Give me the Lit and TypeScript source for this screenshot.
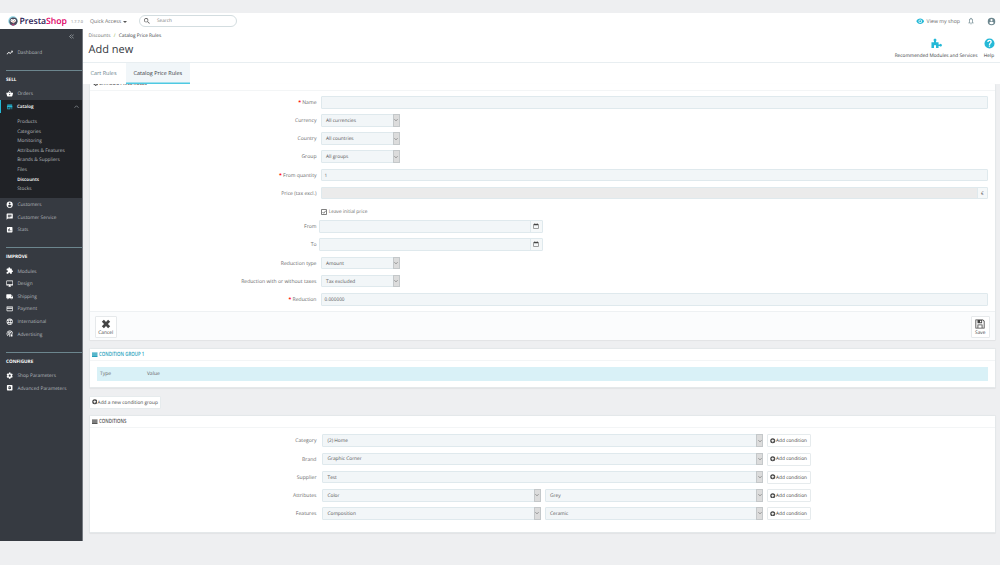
import { LitElement, html, css, svg, nothing } from "lit";
import { customElement, property } from "lit/decorators.js";
import { classMap } from "lit/directives/class-map.js";

const ICONS: Record<string, string> = {
  trend: "M16 6l2.29 2.29-4.88 4.88-4-4L2 16.59 3.41 18l6-6 4 4 6.3-6.29L22 12V6z",
  basket: "M17.21 9l-4.38-6.56a1 1 0 0 0-1.66 0L6.79 9H2c-.55 0-1 .45-1 1l.04.27 2.54 9.27C3.81 20.4 4.6 21 5.5 21h13c.9 0 1.69-.6 1.92-1.46l2.54-9.27L23 10c0-.55-.45-1-1-1h-4.79zM9 9l3-4.4L15 9H9zm3 8a2 2 0 1 1 0-4 2 2 0 0 1 0 4z",
  store: "M20 4H4v2h16V4zm1 10v-2l-1-5H4l-1 5v2h1v6h10v-6h4v6h2v-6h1zm-9 4H6v-4h6v4z",
  account: "M12 2a10 10 0 1 0 0 20 10 10 0 0 0 0-20zm0 3a3 3 0 1 1 0 6 3 3 0 0 1 0-6zm0 14.2a7.2 7.2 0 0 1-6-3.22c.03-1.99 4-3.08 6-3.08s5.97 1.09 6 3.08a7.2 7.2 0 0 1-6 3.22z",
  chat: "M20 2H4a2 2 0 0 0-1.99 2L2 22l4-4h14a2 2 0 0 0 2-2V4a2 2 0 0 0-2-2zM6 9h12v2H6V9zm8 5H6v-2h8v2zm4-6H6V6h12v2z",
  stats: "M19 3H5a2 2 0 0 0-2 2v14c0 1.1.9 2 2 2h14a2 2 0 0 0 2-2V5a2 2 0 0 0-2-2zM9 17H7v-7h2v7zm4 0h-2V7h2v10zm4 0h-2v-4h2v4z",
  puzzle: "M20.5 11H19V7a2 2 0 0 0-2-2h-4V3.5a2.5 2.5 0 0 0-5 0V5H4a2 2 0 0 0-2 2v3.8h1.5a2.7 2.7 0 0 1 0 5.4H2V20c0 1.1.9 2 2 2h3.8v-1.5a2.7 2.7 0 0 1 5.4 0V22H17a2 2 0 0 0 2-2v-4h1.5a2.5 2.5 0 0 0 0-5z",
  screen: "M21 2H3a2 2 0 0 0-2 2v12c0 1.1.9 2 2 2h7l-2 3v1h8v-1l-2-3h7a2 2 0 0 0 2-2V4a2 2 0 0 0-2-2zm0 12H3V4h18v10z",
  truck: "M20 8h-3V4H3a2 2 0 0 0-2 2v11h2a3 3 0 0 0 6 0h6a3 3 0 0 0 6 0h2v-5l-3-4zM6 18.5a1.5 1.5 0 1 1 0-3 1.5 1.5 0 0 1 0 3zm13.5-9l1.96 2.5H17V9.5h2.5zM18 18.5a1.5 1.5 0 1 1 0-3 1.5 1.5 0 0 1 0 3z",
  card: "M20 4H4a2 2 0 0 0-1.99 2L2 18c0 1.11.89 2 2 2h16a2 2 0 0 0 2-2V6a2 2 0 0 0-2-2zm0 14H4v-6h16v6zm0-10H4V6h16v2z",
  globe: "M11.99 2A10 10 0 1 0 12 22a10 10 0 0 0 0-20zm6.93 6h-2.95a15.65 15.65 0 0 0-1.38-3.56A8.03 8.03 0 0 1 18.92 8zM12 4.04c.83 1.2 1.48 2.53 1.91 3.96h-3.82c.43-1.43 1.08-2.76 1.91-3.96zM4.26 14a8.2 8.2 0 0 1 0-4h3.38a16.5 16.5 0 0 0 0 4H4.26zm.82 2h2.95c.32 1.25.78 2.45 1.38 3.56A7.99 7.99 0 0 1 5.08 16zm2.95-8H5.08a7.99 7.99 0 0 1 4.33-3.56A15.65 15.65 0 0 0 8.03 8zM12 19.96A14.1 14.1 0 0 1 10.09 16h3.82A14.1 14.1 0 0 1 12 19.96zM14.34 14H9.66a14.7 14.7 0 0 1 0-4h4.68a14.7 14.7 0 0 1 0 4zm.25 5.56c.6-1.11 1.06-2.31 1.38-3.56h2.95a8.03 8.03 0 0 1-4.33 3.56zM16.36 14a16.5 16.5 0 0 0 0-4h3.38a8.2 8.2 0 0 1 0 4h-3.38z",
  target: "M12 2a10 10 0 0 0-6 18l1.2-1.6A8 8 0 1 1 20 12h2A10 10 0 0 0 12 2zm0 4a6 6 0 0 0-3 11.2l1-1.8A4 4 0 1 1 16 12h2a6 6 0 0 0-6-6zm0 4a2 2 0 0 0-1 3.7V22h2v-8.3a2 2 0 0 0-1-3.7zM15 14h6v7h-6z",
  gear: "M19.43 12.98c.04-.32.07-.64.07-.98s-.03-.66-.07-.98l2.11-1.65a.5.5 0 0 0 .12-.64l-2-3.46a.5.5 0 0 0-.61-.22l-2.49 1a7.3 7.3 0 0 0-1.69-.98l-.38-2.65A.49.49 0 0 0 14 2h-4a.49.49 0 0 0-.49.42l-.38 2.65c-.61.25-1.17.59-1.69.98l-2.49-1a.49.49 0 0 0-.61.22l-2 3.46a.49.49 0 0 0 .12.64l2.11 1.65a7.9 7.9 0 0 0 0 1.96l-2.11 1.65a.5.5 0 0 0-.12.64l2 3.46c.12.22.39.3.61.22l2.49-1c.52.4 1.08.73 1.69.98l.38 2.65c.03.24.24.42.49.42h4c.25 0 .46-.18.49-.42l.38-2.65a7.7 7.7 0 0 0 1.69-.98l2.49 1c.23.09.49 0 .61-.22l2-3.46a.5.5 0 0 0-.12-.64l-2.11-1.65zM12 15.5a3.5 3.5 0 1 1 0-7 3.5 3.5 0 0 1 0 7z",
  cogbox: "M19 3H5a2 2 0 0 0-2 2v14a2 2 0 0 0 2 2h14a2 2 0 0 0 2-2V5a2 2 0 0 0-2-2zm-7 7.5a1.5 1.5 0 1 1 0 3 1.5 1.5 0 0 1 0-3zm0-4.5l1.2 2 2.4-.2 1 1.9L15.4 12l1.2 2.3-1 1.9-2.4-.2L12 18l-1.2-2-2.4.2-1-1.9L8.6 12 7.4 9.7l1-1.9 2.4.2z",
  eye: "M12 4.5C7 4.5 2.73 7.61 1 12c1.73 4.39 6 7.5 11 7.5s9.27-3.11 11-7.5c-1.73-4.39-6-7.5-11-7.5zM12 17a5 5 0 1 1 0-10 5 5 0 0 1 0 10zm0-8a3 3 0 1 0 0 6 3 3 0 0 0 0-6z",
  bell: "M12 22a2 2 0 0 0 2-2h-4a2 2 0 0 0 2 2zm6-6v-5c0-3.07-1.63-5.64-4.5-6.32V4a1.5 1.5 0 0 0-3 0v.68C7.64 5.36 6 7.92 6 11v5l-2 2v1h16v-1l-2-2zm-2 1H8v-6c0-2.48 1.51-4.5 4-4.5s4 2.02 4 4.5v6z",
  help: "M12 1a11 11 0 1 0 0 22 11 11 0 0 0 0-22zm1.4 18h-2.8v-2.7h2.8V19zm2.8-8.1c-1.5 1.5-2.7 1.9-2.7 4.1h-2.9c0-3.2 1.5-4 2.8-5.3 1.5-1.5.4-3-1.3-3-1.2 0-2.1.8-2.2 2.2H7c.1-3 2.2-4.9 5.2-4.9 4.3 0 6.2 4.1 4 6.9z",
  module: "M1 22V9h5.5V6.5a3 3 0 1 1 4.5 0V9h5.5v5h2.2a2.8 2.8 0 1 1 0 3.5h-2.2V22H11v-4.5a2.2 2.2 0 0 0-4.5 0V22z",
  search: "M15.5 14h-.79l-.28-.27a6.5 6.5 0 1 0-.7.7l.27.28v.79l5 4.99L20.49 19l-4.99-5zm-6 0a4.5 4.5 0 1 1 0-9 4.5 4.5 0 0 1 0 9z",
  plus: "M12 1a11 11 0 1 0 0 22 11 11 0 0 0 0-22zm6 13h-4v4h-4v-4H6v-4h4V6h4v4h4z",
  cross: "M7 2l5 5.2L17 2l5 4.5L16.700 12l5.300 5.500-5 4.500-5-5.200L7 22l-5-4.500L7.300 12 2 6.500z",
  save: "M1 1h18l4 4v18H1V1zm2 2v18h3v-8h12v8h3V6l-2.800-3H17v7H6V3H3zm9 1v4h3V4h-3zM8 15v6h8v-6H8z",
  calendar: "M6 1h3v3h6V1h3v3h4v19H2V4h4V1zM4 9v12h16V9H4z",
  list: "M0 2h24v5.500H0zM0 9.300h24v5.500H0zM0 16.600h24V22H0z",
};

const icon = (name: string, cls = "") => html`<svg class="icon ${cls}" viewBox="0 0 24 24">
  ${svg`<path fill="currentColor" fill-rule="evenodd" d=${ICONS[name]}></path>`}
</svg>`;

const base = css`
  * { box-sizing: border-box; }
  .icon { display: block; width: 7px; height: 7px; flex: none; }
`;

@customElement("ps-sidebar")
class PsSidebar extends LitElement {
  static styles = [base, css`
    :host { display: block; width: 83px; flex: none; background: #363a41; color: #b4b9be;
      font-size: 4.800px; border-right: 1px solid #747980; }
    .collapse { height: 17px; padding: 5px 8px 0 0; display: flex; justify-content: flex-end; }
    .collapse svg { width: 5px; height: 5px; }
    .item { height: 12.600px; display: flex; align-items: center; padding-left: 6px; gap: 4px; white-space: nowrap; }
    .item .icon { color: #fff; width: 7.400px; height: 7.400px; }
    .item span { flex: 1; padding-top: 1.400px; }
    .title { height: 17.600px; margin-left: 6px; border-top: 1px solid #6c868e; color: #fff;
      font-weight: 700; font-size: 4.700px; line-height: 18.600px; }
    .first { padding-bottom: 11.500px; }
    .gap { padding-bottom: 11.200px; }
    .open { background: #202226; height: 98px; }
    .open .item { color: #fff; border-left: 1.500px solid #25b9d7; padding-left: 4.500px; font-weight: 600; font-size: 4.600px; }
    .open .item .icon { color: #25b9d7; }
    .open .item .chev { color: #8d9499; width: 5px; height: 5px; margin-right: 3px; }
    .subs { padding: 5px 0 0 17.200px; }
    .sub { height: 9.640px; line-height: 9.640px; white-space: nowrap; }
    .sub.on { color: #fff; font-weight: 600; font-size: 4.600px; }
  `];
  item(name: string, label: string) {
    return html`<div class="item">${icon(name)}<span>${label}</span></div>`;
  }
  render() {
    const subs = ["Products", "Categories", "Monitoring", "Attributes & Features", "Brands & Suppliers", "Files", "Discounts", "Stocks"];
    return html`
      <div class="collapse"><svg viewBox="0 0 10 10" fill="none" stroke="currentColor" stroke-width="1.300"><path d="M5 1L1 5l4 4M9.500 1l-4 4 4 4"></path></svg></div>
      <div class="first">${this.item("trend", "Dashboard")}</div>
      <div class="title">SELL</div>
      ${this.item("basket", "Orders")}
      <div class="open">
        <div class="item">${icon("store")}<span>Catalog</span>
          <svg class="icon chev" viewBox="0 0 10 10" fill="none" stroke="currentColor" stroke-width="1.500"><path d="M1 7.500l4-4 4 4"></path></svg></div>
        <div class="subs">${subs.map((s) => html`<div class=${classMap({ sub: true, on: s === "Discounts" })}>${s}</div>`)}</div>
      </div>
      <div class="gap">
        ${this.item("account", "Customers")}${this.item("chat", "Customer Service")}${this.item("stats", "Stats")}
      </div>
      <div class="title">IMPROVE</div>
      <div class="gap">
        ${this.item("puzzle", "Modules")}${this.item("screen", "Design")}${this.item("truck", "Shipping")}
        ${this.item("card", "Payment")}${this.item("globe", "International")}${this.item("target", "Advertising")}
      </div>
      <div class="title">CONFIGURE</div>
      ${this.item("gear", "Shop Parameters")}${this.item("cogbox", "Advanced Parameters")}
    `;
  }
}

@customElement("ps-select")
class PsSelect extends LitElement {
  @property() value = "";
  static styles = [base, css`
    :host { display: flex; height: 12.700px; background: #f2f6f8; border: 1px solid #dfe9ed; border-radius: 1px;
      align-items: center; color: #555; font-size: 4.800px; padding-left: 4.500px; }
    .text { flex: 1; white-space: nowrap; padding-top: 1.600px; }
    .arrow { width: 7px; align-self: stretch; margin: -1px -1px -1px 0; background: #dcdcdc; border: 1px solid #c4c8ca;
      display: grid; place-items: center; }
    .arrow svg { width: 4px; height: 4px; }
  `];
  render() {
    return html`<span class="text">${this.value}</span><span class="arrow">
      <svg viewBox="0 0 10 10" fill="none" stroke="#777" stroke-width="1.800"><path d="M1 3l4 4 4-4"></path></svg></span>`;
  }
}

@customElement("app-root")
class AppRoot extends LitElement {
  static styles = [base, css`
    :host { display: block; width: 1000px; height: 565px; padding-top: 13px; background: #eeeff1; overflow: hidden;
      font-family: "Open Sans", "Noto Sans", sans-serif; font-size: 5.200px; line-height: 1.350; color: #6b6b6b;
      text-rendering: geometricPrecision; }
    .header { height: 16px; background: #fff; display: flex; align-items: center; white-space: nowrap; }
    .logo { width: 10px; height: 10px; margin-left: 8px; }
    .brand { font-size: 8.700px; font-weight: 600; letter-spacing: -.05px; color: #2c1a55; margin-left: 1.500px; width: 51.500px; padding-top: 1px; }
    .brand b { color: #df0067; font-weight: 600; }
    .version { font-size: 3.900px; width: 19px; color: #777; padding-top: 3px; }
    .quick { width: 49px; font-size: 5.200px; display: flex; align-items: center; gap: 2px; padding-top: 1.600px; }
    .caret { border: 2px solid transparent; border-top: 2.500px solid #555; border-bottom: 0; }
    .search { width: 98px; height: 12px; border: 1px solid #d3dde0; border-radius: 6px; display: flex; align-items: center;
      padding-left: 3px; gap: 6px; font-size: 4.700px; color: #7d7d7d; }
    .search span { padding-top: 1.300px; }
    .search .icon { width: 8px; height: 8px; color: #555; }
    .right { margin-left: auto; display: flex; align-items: center; padding-right: 4px; }
    .right span { padding-top: 1.600px; }
    .right .eye { color: #25b9d7; width: 8.500px; height: 8.500px; margin-right: 2.500px; }
    .right .bell { color: #6c868e; width: 8px; height: 8px; margin: 0 12px 0 7px; }
    .right .user { color: #6c868e; width: 9px; height: 9px; }
    .body { display: flex; height: 512px; }
    .main { flex: 1; min-width: 0; }
    .pagehead { background: #fff; height: 33.500px; border-bottom: 1px solid #e8eef1; display: flex; justify-content: space-between; padding: 2.500px 5.500px 0 5.500px; }
    .crumbs { font-size: 4.800px; line-height: 8px; white-space: nowrap; }
    .crumbs i { font-style: normal; color: #7fae3c; margin: 0 2px; }
    .crumbs span { color: #363a41; }
    h1 { margin: 2px 0 0; font-size: 11px; line-height: 15px; font-weight: 400; color: #363a41; }
    .actions { display: flex; gap: 6px; padding-top: 6px; }
    .action { display: flex; flex-direction: column; align-items: center; color: #363a41; gap: 3px; font-size: 4.750px; line-height: 9.500px; white-space: nowrap; }
    .action .icon { width: 11px; height: 11px; color: #25b9d7; }
    .tabs { background: #fff; height: 21.500px; display: flex; font-size: 5.500px; line-height: 21px; white-space: nowrap; color: #6c868e; }
    .tab { padding-left: 7.500px; width: 42.500px; }
    .tab.on { width: 64.500px; padding-left: 8px; background: #f1f6f9; color: #363a41; box-shadow: inset 0 -1.500px #4fc9e2; }
    .content { padding: 0 4.500px 0 5.500px; }
    .panel { background: #fff; border: 1px solid #e4e8ea; border-radius: 1.500px; box-shadow: 0 .5px 1px rgba(0,0,0,.05); }
    .form { border-top: 0; height: 255.500px; display: flex; flex-direction: column; }
    .clip { height: 7px; border-bottom: 1px solid #f3f5f6; overflow: hidden; padding-left: 3px; flex: none; }
    .clip .heading { height: 6px; margin-top: -3px; border: 0; padding: 0; color: #555; }
    .rows { flex: 1; padding: 5px 7px 0 0; }
    .row { height: 18.150px; display: flex; align-items: flex-start; }
    .row label { width: 227px; margin-right: 4px; text-align: right; line-height: 14.500px; height: 12.700px; font-size: 5.100px; white-space: nowrap; flex: none; }
    .row label b { color: #f00; font-weight: 700; }
    .input { flex: 1; height: 12.700px; background: #f2f6f8; border: 1px solid #dfe9ed; border-radius: 1px; font-size: 4.700px; color: #555;
      line-height: 12.500px; padding-left: 3px; display: flex; justify-content: space-between; }
    .input.off { background: #ebebeb; }
    .input.date { flex: 0 0 224px; margin-left: -1.800px; }
    .addon { width: 9.500px; display: grid; place-items: center; background: #f5f8f9; border-left: 1px solid #dfe9ed; }
    .date .addon { width: 12px; }
    .addon .icon { width: 6px; height: 6px; color: #444; margin-bottom: 1px; }
    .row ps-select { width: 79px; }
    .check { height: 15.500px; padding: 0 0 1px 231px; display: flex; align-items: center; gap: 2.200px; font-size: 4.800px; }
    .check svg { width: 6px; height: 6px; }
    .footer { height: 29px; background: #fbfcfd; border-top: 1px solid #eef1f3; display: flex; justify-content: space-between; padding: 3.500px 4.800px 0 5.200px; flex: none; }
    .btn { height: 22px; width: 22px; background: #fff; border: 1px solid #e6e9eb; border-radius: 1px; color: #444; font-size: 4.800px; line-height: 6px;
      display: flex; flex-direction: column; align-items: center; padding-top: 2.500px; gap: .5px; }
    .btn.s { width: 19px; }
    .btn .icon { width: 10px; height: 10px; }
    .heading { height: 12px; display: flex; align-items: center; gap: .8px; padding-left: 2.800px; border-bottom: 1px solid #f3f5f6; color: #555;
      font-size: 5.800px; font-weight: 600; white-space: nowrap; }
    .heading span { display: inline-block; transform: scaleX(.76); transform-origin: 0 50%; }
    .heading .icon { width: 5.500px; height: 5.500px; }
    .panel > .heading span { padding-top: 1.300px; }
    .group { margin-top: 8.500px; height: 40px; }
    .group .heading { color: #25a0bb; }
    .thead { margin: 6px 7px 0; height: 14px; background: #d9f1f7; display: flex; line-height: 14.500px; padding-left: 3.400px; color: #666; font-size: 5px; }
    .thead span { width: 47px; }
    .sbtn { display: inline-flex; height: 13px; align-items: center; gap: .6px; background: #fff; border: 1px solid #e6ebed; border-radius: 1px; color: #444; font-size: 4.750px; padding: 0 2px; white-space: nowrap; flex: none; }
    .sbtn span { padding-top: 1.200px; }
    .sbtn .icon { width: 5.500px; height: 5.500px; }
    .addgroup { margin: 7.500px 0 6.500px; height: 13px; display: flex; }
    .addgroup .sbtn { width: 72px; font-size: 4.800px; }
    .addgroup .sbtn span { padding-top: 2px; }
    .conds { height: 118px; }
    .conds .rows { padding-top: 6.400px; }
    .conds .row label { margin-right: 5.500px; }
    .pair { display: flex; gap: 4px; width: 441px; margin-right: 4px; }
    .pair ps-select { flex: 1; width: auto; }
    .row .sbtn { width: 44px; }
  `];

  field(label: string, control: unknown, required = false) {
    return html`<div class="row"><label>${required ? html`<b>*</b> ` : nothing}${label}</label>${control}</div>`;
  }
  cond(label: string, values: string[]) {
    return this.field(label, html`<div class="pair">${values.map((v) => html`<ps-select .value=${v}></ps-select>`)}</div>
      <span class="sbtn">${icon("plus")}<span>Add condition</span></span>`);
  }
  select(v: string) { return html`<ps-select .value=${v}></ps-select>`; }
  date() { return html`<div class="input date"><span></span><span class="addon">${icon("calendar")}</span></div>`; }

  render() {
    return html`
      <div class="header">
        <svg class="logo" viewBox="0 0 20 20">
          <circle cx="10" cy="10" r="9.500" fill="#8fd3e2"></circle>
          <path d="M3 13C2 6 6 3 11 3c5 0 8 3 8 8-1 5-4 8-9 8-4 0-6-2-7-6z" fill="#4a4b5c"></path>
          <path d="M5 9c0-3 3-4 5-2 2-2 6-1 6 2s-3 4-5.500 4S5 12 5 9z" fill="#fff"></path>
          <circle cx="7.800" cy="9" r=".8" fill="#444"></circle><circle cx="13" cy="9" r=".8" fill="#444"></circle>
          <path d="M8 11l3-1 3 1-3 4z" fill="#e8c0b4"></path>
          <path d="M7 15.500c2 1.500 5 1.500 7 0-1 2.500-2 3.500-4 3.500s-2.500-1-3-3.500z" fill="#c33a72"></path>
        </svg>
        <span class="brand">Presta<b>Shop</b></span><span class="version">1.7.7.0</span>
        <span class="quick">Quick Access<span class="caret"></span></span>
        <div class="search">${icon("search")}<span>Search</span></div>
        <div class="right">${icon("eye", "eye")}<span>View my shop</span>${icon("bell", "bell")}${icon("account", "user")}</div>
      </div>
      <div class="body">
        <ps-sidebar></ps-sidebar>
        <div class="main">
          <div class="pagehead">
            <div><div class="crumbs">Discounts <i>/</i> <span>Catalog Price Rules</span></div><h1>Add new</h1></div>
            <div class="actions">
              <div class="action">${icon("module")}Recommended Modules and Services</div>
              <div class="action">${icon("help")}Help</div>
            </div>
          </div>
          <div class="tabs"><div class="tab">Cart Rules</div><div class="tab on">Catalog Price Rules</div></div>
          <div class="content">
            <div class="panel form">
              <div class="clip"><div class="heading">${icon("gear")}<span>CATALOG PRICE RULES</span></div></div>
              <div class="rows">
                ${this.field("Name", html`<div class="input"></div>`, true)}
                ${this.field("Currency", this.select("All currencies"))}
                ${this.field("Country", this.select("All countries"))}
                ${this.field("Group", this.select("All groups"))}
                ${this.field("From quantity", html`<div class="input">1</div>`, true)}
                ${this.field("Price (tax excl.)", html`<div class="input off"><span></span><span class="addon">€</span></div>`)}
                <div class="check"><svg viewBox="0 0 12 12" fill="none" stroke="#555" stroke-width="1.500"><path d="M1 1h10v10H1zM3 6l2.500 2.500L9.500 3.500"></path></svg>Leave initial price</div>
                ${this.field("From", this.date())}
                ${this.field("To", this.date())}
                ${this.field("Reduction type", this.select("Amount"))}
                ${this.field("Reduction with or without taxes", this.select("Tax excluded"))}
                ${this.field("Reduction", html`<div class="input">0.000000</div>`, true)}
              </div>
              <div class="footer">
                <div class="btn">${icon("cross")}Cancel</div>
                <div class="btn s">${icon("save")}Save</div>
              </div>
            </div>
            <div class="panel group">
              <div class="heading">${icon("list")}<span>CONDITION GROUP 1</span></div>
              <div class="thead"><span>Type</span><span>Value</span></div>
            </div>
            <div class="addgroup"><span class="sbtn">${icon("plus")}<span>Add a new condition group</span></span></div>
            <div class="panel conds">
              <div class="heading">${icon("list")}<span>CONDITIONS</span></div>
              <div class="rows">
                ${this.cond("Category", ["(2) Home"])}
                ${this.cond("Brand", ["Graphic Corner"])}
                ${this.cond("Supplier", ["Test"])}
                ${this.cond("Attributes", ["Color", "Grey"])}
                ${this.cond("Features", ["Composition", "Ceramic"])}
              </div>
            </div>
          </div>
        </div>
      </div>`;
  }
}
